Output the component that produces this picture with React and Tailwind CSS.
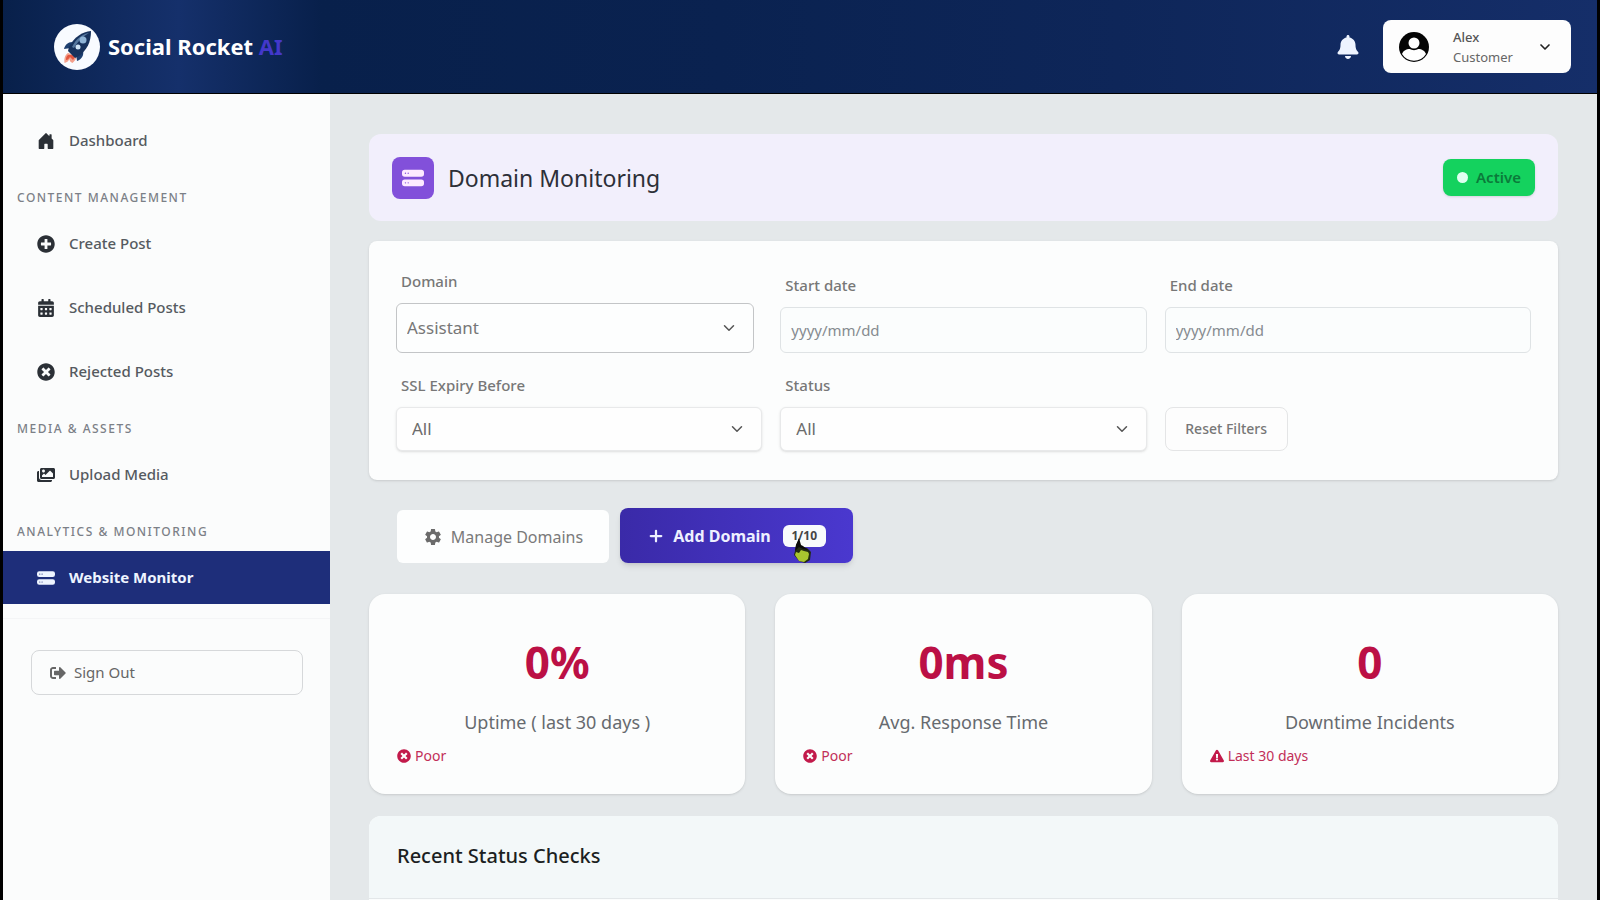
import { useState } from 'react'
import {
  FaBell,
  FaCalendarAlt,
  FaExclamationTriangle,
  FaImages,
  FaPlusCircle,
  FaSignOutAlt,
  FaTimesCircle,
} from 'react-icons/fa'
import { BsHddStackFill, BsHouseDoorFill } from 'react-icons/bs'
import { MdSettings } from 'react-icons/md'
import { ChevronDown, Plus } from 'lucide-react'

const NAV = [
  { items: [{ label: 'Dashboard', icon: BsHouseDoorFill }] },
  {
    title: 'Content Management',
    items: [
      { label: 'Create Post', icon: FaPlusCircle },
      { label: 'Scheduled Posts', icon: FaCalendarAlt },
      { label: 'Rejected Posts', icon: FaTimesCircle },
    ],
  },
  { title: 'Media & Assets', items: [{ label: 'Upload Media', icon: FaImages }] },
  {
    title: 'Analytics & Monitoring',
    items: [{ label: 'Website Monitor', icon: BsHddStackFill, active: true }],
  },
]

const STATS = [
  { value: '0%', label: 'Uptime ( last 30 days )', note: 'Poor', icon: FaTimesCircle },
  { value: '0ms', label: 'Avg. Response Time', note: 'Poor', icon: FaTimesCircle },
  { value: '0', label: 'Downtime Incidents', note: 'Last 30 days', icon: FaExclamationTriangle },
]

const INIT_FILTERS = { domain: 'Assistant', start: '', end: '', ssl: 'All', status: 'All' }

function RocketLogo() {
  return (
    <svg viewBox="0 0 46 46" className="h-[46px] w-[46px] shrink-0" aria-hidden="true">
      <circle cx="23" cy="23" r="23" fill="#f8fbff" />
      <path d="M14 29c-3 2-4 5-3.500 10 3-1 4-2 5-4 0 2 1 3 3 4 2-2 4-4 4-7z" fill="#f3a08c" />
      <path d="M14 31c-2 2-2 3-2 5 2 0 3-2 4-3l3 3c1-1 2-3 1-5z" fill="#e2563f" />
      <path d="M18 18c-4 0-7 3-8 7l7-1zM29 27c1 4-1 8-6 10l-1-7z" fill="#1d3f70" />
      <path d="M37 7c-9 1-17 6-22 16l-1 4 7 7 4-2C33 26 37 18 37 7z" fill="#17325c" />
      <path d="M35 9c-7 1-13 6-17 14l2 1C24 17 29 12 35 9z" fill="#56789f" />
      <circle cx="29" cy="16" r="3.500" fill="#8fb4d6" />
      <circle cx="24" cy="23" r="2.500" fill="#cfe4f5" />
    </svg>
  )
}

function Avatar() {
  return (
    <svg viewBox="0 0 30 30" className="h-[30px] w-[30px] shrink-0" aria-hidden="true">
      <circle cx="15" cy="15" r="15" fill="#050505" />
      <circle cx="15" cy="11" r="5.500" fill="#fff" />
      <path d="M3 22c1-3 4-5 8-5 2 1.500 6 1.500 8 0 4 0 7 2 8 5a14 14 0 0 1-24 0z" fill="#fff" />
    </svg>
  )
}

function HandPointer() {
  return (
    <svg
      viewBox="0 0 22 28"
      className="pointer-events-none absolute top-[11px] left-[8px] h-7 w-[22px]"
      aria-hidden="true"
    >
      <path d="M8 3 5 9l-1 6-1 4 5 6 6 2 5-3 1-8-4-4-6-1-1-3z" fill="#222b12" />
      <path d="M8 2 5 9l-1 6 4-4 4 2 5 1-5-4-2-1z" fill="#0a0a0a" />
      <path d="m5 16 3 1 2-3 3 1 4 1 1 2-1 5-4 3-5-1-4-6z" fill="#a9c52f" />
    </svg>
  )
}

function Header() {
  return (
    <header className="flex h-[94px] shrink-0 items-center justify-between border-b border-black bg-[linear-gradient(90deg,#08204a_0%,#15306b_11%,#08204b_20%,#0a2250_45%,#0e2659_70%,#152e69_100%)] pr-[26px] pl-[51px]">
      <a href="#" className="flex items-center gap-2 text-[22px] font-bold text-white">
        <RocketLogo />
        <span>
          Social Rocket <span className="text-[#4338ca]">AI</span>
        </span>
      </a>
      <div className="flex items-center gap-6">
        <button aria-label="Notifications" className="text-[#eef4ff]">
          <FaBell className="h-6 w-[22px]" />
        </button>
        <button className="flex h-[53px] w-[188px] items-center rounded-lg bg-[#fdfdfd] pr-[18px] pl-4 text-left">
          <Avatar />
          <span className="ml-6 flex-1 text-[13px] leading-5 text-[#555]">
            <span className="block font-medium">Alex</span>
            <span className="block text-[#666]">Customer</span>
          </span>
          <ChevronDown className="h-4 w-4 text-[#222]" strokeWidth={2.5} />
        </button>
      </div>
    </header>
  )
}

function Sidebar() {
  return (
    <aside className="w-[327px] shrink-0 bg-[#fbfcfc] pt-5">
      <nav>
        {NAV.map((group, i) => (
          <div key={i}>
            {group.title && (
              <h2 className="pt-[21px] pb-[9px] pl-[14px] text-xs leading-5 font-medium tracking-[1.5px] text-[#7b8087] uppercase">
                {group.title}
              </h2>
            )}
            <ul className="flex flex-col gap-[11px]">
              {group.items.map(({ label, icon: Icon, active }) => (
                <li key={label}>
                  <a
                    href="#"
                    className={
                      active
                        ? 'flex h-[53px] items-center gap-[14px] bg-[#1e2e7a] pl-[34px] text-[15px] font-bold text-[#eef4ff]'
                        : 'flex h-[53px] items-center gap-[14px] pl-[34px] text-[15px] font-medium text-[#555a60]'
                    }
                  >
                    <Icon className={active ? 'h-[18px] w-[18px]' : 'h-[18px] w-[18px] text-[#2b3036]'} />
                    {label}
                  </a>
                </li>
              ))}
            </ul>
          </div>
        ))}
      </nav>
      <div className="mt-[14px] border-t border-[#f4f5f6] pt-[31px] pr-[27px] pl-7">
        <button className="flex h-[45px] w-full items-center gap-2 rounded-lg border border-[#d6d8da] px-[18px] text-[15px] text-[#666]">
          <FaSignOutAlt className="h-4 w-4" />
          Sign Out
        </button>
      </div>
    </aside>
  )
}

function Field({ id, label, children }) {
  return (
    <div className="flex flex-col gap-2.5">
      <label htmlFor={id} className="pl-[5px] text-[15px] leading-6 font-medium text-[#777]">
        {label}
      </label>
      {children}
    </div>
  )
}

function DateInput({ id, value, onChange }) {
  return (
    <input
      id={id}
      type="text"
      placeholder="yyyy/mm/dd"
      value={value}
      onChange={(e) => onChange(e.target.value)}
      className="h-[46px] w-full rounded-md border border-[#dfe3e5] bg-[#fbfdfd] px-2.5 text-[15px] text-[#777] placeholder:text-[#868b90]"
    />
  )
}

function Select({ id, value, options, onChange, outlined }) {
  return (
    <div className={outlined ? 'relative mr-2' : 'relative'}>
      <select
        id={id}
        value={value}
        onChange={(e) => onChange(e.target.value)}
        className={
          outlined
            ? 'h-[50px] w-full appearance-none rounded-md border border-[#c3c5c7] bg-[#fdfefe] px-2.5 text-[17px] text-[#777]'
            : 'h-11 w-full appearance-none rounded-md border border-[#e8e9ea] bg-[#fefefe] px-[15px] text-[17px] text-[#6c6c6c] shadow-sm'
        }
      >
        {options.map((o) => (
          <option key={o}>{o}</option>
        ))}
      </select>
      <ChevronDown className="pointer-events-none absolute top-1/2 right-4 h-[18px] w-[18px] -translate-y-1/2 text-[#555]" />
    </div>
  )
}

function Filters() {
  const [filters, setFilters] = useState(INIT_FILTERS)
  const set = (key) => (value) => setFilters({ ...filters, [key]: value })

  return (
    <section className="mt-5 rounded-lg bg-[#fcfdfd] px-[27px] pt-7 pb-[29px] shadow-sm">
      <div className="grid grid-cols-3 items-end gap-x-[18px] gap-y-5">
        <Field id="domain" label="Domain">
          <Select id="domain" value={filters.domain} options={['Assistant']} onChange={set('domain')} outlined />
        </Field>
        <Field id="start" label="Start date">
          <DateInput id="start" value={filters.start} onChange={set('start')} />
        </Field>
        <Field id="end" label="End date">
          <DateInput id="end" value={filters.end} onChange={set('end')} />
        </Field>
        <Field id="ssl" label="SSL Expiry Before">
          <Select id="ssl" value={filters.ssl} options={['All', '7 days', '30 days']} onChange={set('ssl')} />
        </Field>
        <Field id="status" label="Status">
          <Select id="status" value={filters.status} options={['All', 'Up', 'Down']} onChange={set('status')} />
        </Field>
        <button
          onClick={() => setFilters(INIT_FILTERS)}
          className="h-11 w-[123px] rounded-lg border border-[#e4e5e6] bg-[#fdfdfd] text-sm font-medium text-[#777]"
        >
          Reset Filters
        </button>
      </div>
    </section>
  )
}

function StatCard({ value, label, note, icon: Icon }) {
  return (
    <article className="rounded-2xl bg-[#fcfdfd] px-7 pt-[38px] pb-7 shadow-sm">
      <p className="text-center text-[44px] leading-[60px] font-bold text-[#bb1045]">{value}</p>
      <p className="mt-4 text-center text-lg leading-7 text-[#666a6f]">{label}</p>
      <p className="mt-2.5 flex items-center gap-1 text-sm leading-5 text-[#c22f58]">
        <Icon className="h-3.5 w-3.5 text-[#c21a4b]" />
        {note}
      </p>
    </article>
  )
}

export default function App() {
  return (
    <div className="flex h-screen flex-col overflow-hidden border-r-[3px] border-l-[3px] border-black bg-[#e4e8ea] font-['Noto_Sans','Open_Sans',sans-serif]">
      <Header />
      <div className="flex min-h-0 flex-1">
        <Sidebar />
        <main className="min-w-0 flex-1 overflow-hidden px-[39px] pt-10">
          <section className="flex h-[87px] items-center justify-between rounded-xl bg-[#f2effc] px-[23px]">
            <div className="flex items-center gap-[14px]">
              <span className="flex h-[42px] w-[42px] items-center justify-center rounded-lg bg-[#8250da] text-[#fdeaff]">
                <BsHddStackFill className="h-[22px] w-[22px]" />
              </span>
              <h1 className="text-[23px] leading-8 text-[#2d2f38]">Domain Monitoring</h1>
            </div>
            <span className="flex h-[37px] w-[92px] items-center justify-center gap-2 rounded-lg bg-[#14d25e] text-[15px] font-semibold text-[#0b7a3a] shadow">
              <span className="h-[11px] w-[11px] rounded-full bg-[#dffff0]" />
              Active
            </span>
          </section>

          <Filters />

          <div className="mt-7 flex items-end gap-[11px] pl-7">
            <button className="flex h-[53px] w-[212px] items-center justify-center gap-2 rounded-md bg-[#fdfefe] text-base text-[#7a7a7a]">
              <MdSettings className="h-5 w-5 text-[#6b6b6b]" />
              Manage Domains
            </button>
            <button className="flex h-[55px] w-[233px] items-center justify-center rounded-lg bg-linear-to-r from-[#3a2aa8] to-[#4a38cf] text-base font-bold text-[#eef0ff] shadow-md">
              <Plus className="mr-2 h-[18px] w-[18px]" strokeWidth={3} />
              Add Domain
              <span className="relative ml-3 flex h-[22px] w-[43px] items-center justify-center rounded-md bg-[#f8fafc] text-xs text-[#444]">
                1/10
                <HandPointer />
              </span>
            </button>
          </div>

          <div className="mt-[31px] grid grid-cols-3 gap-[30px]">
            {STATS.map((stat) => (
              <StatCard key={stat.label} {...stat} />
            ))}
          </div>

          <section className="mt-[22px] rounded-t-xl bg-[#fbfdfd]">
            <h2 className="rounded-t-xl border-b border-[#e3e7e9] bg-[#f3f8f9] px-7 pt-6 pb-[26px] text-xl leading-8 font-medium text-[#1c1f22]">
              Recent Status Checks
            </h2>
            <div className="h-40" />
          </section>
        </main>
      </div>
    </div>
  )
}
